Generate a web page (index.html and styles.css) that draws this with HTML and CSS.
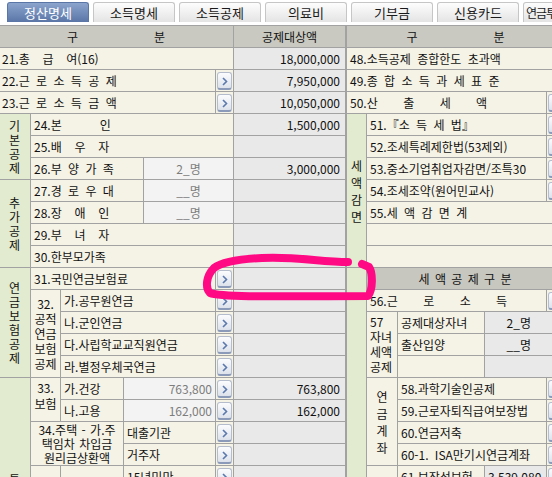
FILE: index.html
```html
<!DOCTYPE html>
<html lang="ko">
<head>
<meta charset="utf-8">
<title>정산명세</title>
<link rel="stylesheet" href="styles.css">
</head>
<body>
<div class="page">
  <div class="tabs">
    <div class="tab active">정산명세</div>
    <div class="tab">소득명세</div>
    <div class="tab">소득공제</div>
    <div class="tab">의료비</div>
    <div class="tab">기부금</div>
    <div class="tab">신용카드</div>
    <div class="tab last">연금투자명세</div>
  </div>
  <div class="sheet">
    <table class="grid left">
      <colgroup><col class="c1"><col class="c2"><col class="c3"><col class="c4"><col class="c5"><col class="c6"><col class="c7"></colgroup>
      <tr><th colspan="6"><div class="split"><span>구</span><span>분</span></div></th><th>공제대상액</th></tr>
      <tr><td colspan="6" class="lb">21.총  급  여(16)</td><td class="v">18,000,000</td></tr>
      <tr><td colspan="5" class="lb">22.근 로 소 득 공 제</td><td class="bt"><span class="btn"><svg width="13" height="16" viewBox="0 0 13 16"><path d="M5 5l3.5 3.5L5 12" fill="none" stroke="#5b79ad" stroke-width="1.6"/></svg></span></td><td class="v">7,950,000</td></tr>
      <tr><td colspan="5" class="lb">23.근 로 소 득 금 액</td><td class="bt"><span class="btn"><svg width="13" height="16" viewBox="0 0 13 16"><path d="M5 5l3.5 3.5L5 12" fill="none" stroke="#5b79ad" stroke-width="1.6"/></svg></span></td><td class="v">10,050,000</td></tr>
      <tr><td rowspan="3" class="grp g14">기<br>본<br>공<br>제</td><td colspan="5" class="lb">24.본      인</td><td class="v">1,500,000</td></tr>
      <tr><td colspan="5" class="lb">25.배  우  자</td><td class="v"></td></tr>
      <tr><td colspan="3" class="lb">26.부 양 가 족</td><td colspan="2" class="in">2_명</td><td class="v">3,000,000</td></tr>
      <tr><td rowspan="4" class="grp g14">추<br>가<br>공<br>제</td><td colspan="3" class="lb">27.경 로 우 대</td><td colspan="2" class="in">__명</td><td class="v"></td></tr>
      <tr><td colspan="3" class="lb">28.장  애  인</td><td colspan="2" class="in">__명</td><td class="v"></td></tr>
      <tr><td colspan="5" class="lb">29.부  녀  자</td><td class="v"></td></tr>
      <tr><td colspan="5" class="lb">30.한부모가족</td><td class="v"></td></tr>
      <tr><td rowspan="5" class="grp g14">연<br>금<br>보<br>험<br>공<br>제</td><td colspan="4" class="lb">31.국민연금보험료</td><td class="bt"><span class="btn"><svg width="13" height="16" viewBox="0 0 13 16"><path d="M5 5l3.5 3.5L5 12" fill="none" stroke="#5b79ad" stroke-width="1.6"/></svg></span></td><td class="v"></td></tr>
      <tr><td rowspan="4" class="sub s15">32.<br>공적<br>연금<br>보험<br>공제</td><td colspan="3" class="lb">가.공무원연금</td><td class="bt"><span class="btn"><svg width="13" height="16" viewBox="0 0 13 16"><path d="M5 5l3.5 3.5L5 12" fill="none" stroke="#5b79ad" stroke-width="1.6"/></svg></span></td><td class="v"></td></tr>
      <tr><td colspan="3" class="lb">나.군인연금</td><td class="bt"><span class="btn"><svg width="13" height="16" viewBox="0 0 13 16"><path d="M5 5l3.5 3.5L5 12" fill="none" stroke="#5b79ad" stroke-width="1.6"/></svg></span></td><td class="v"></td></tr>
      <tr><td colspan="3" class="lb">다.사립학교교직원연금</td><td class="bt"><span class="btn"><svg width="13" height="16" viewBox="0 0 13 16"><path d="M5 5l3.5 3.5L5 12" fill="none" stroke="#5b79ad" stroke-width="1.6"/></svg></span></td><td class="v"></td></tr>
      <tr><td colspan="3" class="lb">라.별정우체국연금</td><td class="bt"><span class="btn"><svg width="13" height="16" viewBox="0 0 13 16"><path d="M5 5l3.5 3.5L5 12" fill="none" stroke="#5b79ad" stroke-width="1.6"/></svg></span></td><td class="v"></td></tr>
      <tr><td rowspan="10" class="grp g14 low">특<br>별<br>소<br>득<br>공<br>제</td><td rowspan="2" class="sub s16 top">33.<br>보험</td><td class="lb">가.건강</td><td colspan="2" class="in num">763,800</td><td class="bt"><span class="btn"><svg width="13" height="16" viewBox="0 0 13 16"><path d="M5 5l3.5 3.5L5 12" fill="none" stroke="#5b79ad" stroke-width="1.6"/></svg></span></td><td class="v">763,800</td></tr>
      <tr><td class="lb">나.고용</td><td colspan="2" class="in num">162,000</td><td class="bt"><span class="btn"><svg width="13" height="16" viewBox="0 0 13 16"><path d="M5 5l3.5 3.5L5 12" fill="none" stroke="#5b79ad" stroke-width="1.6"/></svg></span></td><td class="v">162,000</td></tr>
      <tr><td colspan="2" rowspan="2" class="lb ml">34.주택 - 가.주<br>택임차 차입금<br>원리금상환액</td><td colspan="2" class="lb">대출기관</td><td class="bt"><span class="btn"><svg width="13" height="16" viewBox="0 0 13 16"><path d="M5 5l3.5 3.5L5 12" fill="none" stroke="#5b79ad" stroke-width="1.6"/></svg></span></td><td class="v"></td></tr>
      <tr><td colspan="2" class="lb">거주자</td><td class="bt"><span class="btn"><svg width="13" height="16" viewBox="0 0 13 16"><path d="M5 5l3.5 3.5L5 12" fill="none" stroke="#5b79ad" stroke-width="1.6"/></svg></span></td><td class="v"></td></tr>
      <tr><td rowspan="6" class="lb"></td><td rowspan="6" class="lb"></td><td colspan="2" class="lb">15년미만</td><td class="bt"><span class="btn"><svg width="13" height="16" viewBox="0 0 13 16"><path d="M5 5l3.5 3.5L5 12" fill="none" stroke="#5b79ad" stroke-width="1.6"/></svg></span></td><td class="v"></td></tr>
      <tr><td colspan="2" class="lb">15년~29년</td><td class="bt"></td><td class="v"></td></tr>
      <tr><td colspan="2" class="lb">30년이상</td><td class="bt"></td><td class="v"></td></tr>
      <tr><td colspan="2" class="lb">고정금리</td><td class="bt"></td><td class="v"></td></tr>
      <tr><td colspan="2" class="lb">기타대출</td><td class="bt"></td><td class="v"></td></tr>
      <tr><td colspan="2" class="lb">15년이상</td><td class="bt"></td><td class="v"></td></tr>
    </table>
    <table class="grid right">
      <colgroup><col class="r1"><col class="r2"><col class="r3"><col class="r4"><col class="r5"></colgroup>
      <tr><th colspan="5"><div class="split"><span>구</span><span>분</span></div></th></tr>
      <tr><td colspan="5" class="lb">48.소득공제 종합한도 초과액</td></tr>
      <tr><td colspan="5" class="lb">49.종 합 소 득 과 세 표 준</td></tr>
      <tr><td colspan="4" class="lb">50.산    출    세    액</td><td class="bt"><span class="btn"><svg width="13" height="16" viewBox="0 0 13 16"><path d="M5 5l3.5 3.5L5 12" fill="none" stroke="#5b79ad" stroke-width="1.6"/></svg></span></td></tr>
      <tr><td rowspan="7" class="grp g17">세<br>액<br>감<br>면</td><td colspan="3" class="lb">51.『소 득 세 법』</td><td class="bt"><span class="btn"><svg width="13" height="16" viewBox="0 0 13 16"><path d="M5 5l3.5 3.5L5 12" fill="none" stroke="#5b79ad" stroke-width="1.6"/></svg></span></td></tr>
      <tr><td colspan="3" class="lb">52.조세특례제한법(53제외)</td><td class="bt"><span class="btn"><svg width="13" height="16" viewBox="0 0 13 16"><path d="M5 5l3.5 3.5L5 12" fill="none" stroke="#5b79ad" stroke-width="1.6"/></svg></span></td></tr>
      <tr><td colspan="3" class="lb">53.중소기업취업자감면/조특30</td><td class="bt"><span class="btn"><svg width="13" height="16" viewBox="0 0 13 16"><path d="M5 5l3.5 3.5L5 12" fill="none" stroke="#5b79ad" stroke-width="1.6"/></svg></span></td></tr>
      <tr><td colspan="3" class="lb">54.조세조약(원어민교사)</td><td class="bt"><span class="btn"><svg width="13" height="16" viewBox="0 0 13 16"><path d="M5 5l3.5 3.5L5 12" fill="none" stroke="#5b79ad" stroke-width="1.6"/></svg></span></td></tr>
      <tr><td colspan="4" class="lb">55.세 액 감 면 계</td></tr>
      <tr><td colspan="4" class="lb"></td></tr>
      <tr><td colspan="4" class="lb"></td></tr>
      <tr><td rowspan="12" class="grp"></td><td colspan="4" class="hd2">세 액 공 제 구 분</td></tr>
      <tr><td colspan="3" class="lb">56.근    로    소    득</td><td class="bt"><span class="btn"><svg width="13" height="16" viewBox="0 0 13 16"><path d="M5 5l3.5 3.5L5 12" fill="none" stroke="#5b79ad" stroke-width="1.6"/></svg></span></td></tr>
      <tr><td rowspan="3" class="sub s15 top left-al">57<br>자녀<br>세액<br>공제</td><td class="lb">공제대상자녀</td><td colspan="2" class="v cnt">2_명</td></tr>
      <tr><td class="lb">출산입양</td><td colspan="2" class="v cnt">__명</td></tr>
      <tr><td class="lb"></td><td colspan="2" class="v"></td></tr>
      <tr><td rowspan="4" class="sub s17">연<br>금<br>계<br>좌</td><td colspan="2" class="lb">58.과학기술인공제</td><td class="bt"><span class="btn"><svg width="13" height="16" viewBox="0 0 13 16"><path d="M5 5l3.5 3.5L5 12" fill="none" stroke="#5b79ad" stroke-width="1.6"/></svg></span></td></tr>
      <tr><td colspan="2" class="lb">59.근로자퇴직급여보장법</td><td class="bt"><span class="btn"><svg width="13" height="16" viewBox="0 0 13 16"><path d="M5 5l3.5 3.5L5 12" fill="none" stroke="#5b79ad" stroke-width="1.6"/></svg></span></td></tr>
      <tr><td colspan="2" class="lb">60.연금저축</td><td class="bt"><span class="btn"><svg width="13" height="16" viewBox="0 0 13 16"><path d="M5 5l3.5 3.5L5 12" fill="none" stroke="#5b79ad" stroke-width="1.6"/></svg></span></td></tr>
      <tr><td colspan="2" class="lb">60-1. ISA만기시연금계좌</td><td class="bt"><span class="btn"><svg width="13" height="16" viewBox="0 0 13 16"><path d="M5 5l3.5 3.5L5 12" fill="none" stroke="#5b79ad" stroke-width="1.6"/></svg></span></td></tr>
      <tr><td rowspan="3" class="lb"></td><td class="lb">61.보장성보험</td><td class="v amt">3,539,080</td><td class="bt"><span class="btn"><svg width="13" height="16" viewBox="0 0 13 16"><path d="M5 5l3.5 3.5L5 12" fill="none" stroke="#5b79ad" stroke-width="1.6"/></svg></span></td></tr>
      <tr><td class="lb">장애인전용</td><td class="v"></td><td class="bt"></td></tr>
      <tr><td class="lb">의료비</td><td class="v"></td><td class="bt"></td></tr>
    </table>
  </div>
  <svg class="scribble" width="552" height="477" viewBox="0 0 552 477">
    <path d="M348 262 C322 262 292 256 262 258 C240 259 222 262 214 268 C206 276 205 288 210 293 C222 298 300 296 368 296 C373 290 373 273 369 267 L362 264" fill="none" stroke="#ff0a84" stroke-width="8" stroke-linecap="round" stroke-linejoin="round"/>
  </svg>
</div>
</body>
</html>
```
FILE: styles.css
```css
html, body {
  margin: 0;
  padding: 0;
}
body {
  width: 552px;
  height: 477px;
  overflow: hidden;
  background: #ffffff;
  font-family: "Noto Sans CJK KR", "DejaVu Sans", sans-serif;
  font-size: 12px;
  color: #111111;
}
.page {
  position: relative;
  width: 552px;
  height: 477px;
  overflow: hidden;
}
.tabs {
  display: flex;
  gap: 4px;
  height: 25px;
  box-sizing: border-box;
  padding: 2px 0 0 7px;
}
.tab {
  flex: 0 0 82px;
  height: 20px;
  box-sizing: border-box;
  border: 1px solid #c6c6c6;
  border-bottom: none;
  border-radius: 3px 3px 0 0;
  background: linear-gradient(#fdfdfd, #e4e4e4);
  text-align: center;
  line-height: 19px;
  font-size: 13px;
  color: #1a1a1a;
  white-space: nowrap;
  overflow: hidden;
}
.tab.last {
  text-align: left;
  padding-left: 2px;
  font-size: 12px;
  letter-spacing: -1px;
}
.tab.active {
  background: linear-gradient(#8ba4cd, #5a76a7);
  border-color: #5a76a7;
  color: #ffffff;
}
.sheet {
  display: flex;
  align-items: flex-start;
  margin-left: -2px;
}
table.grid {
  border-collapse: collapse;
  table-layout: fixed;
  flex: none;
}
table.left { width: 347px; }
table.right { width: 218px; }
col.c1 { width: 32px; }
col.c2 { width: 30px; }
col.c3 { width: 63px; }
col.c4 { width: 20px; }
col.c5 { width: 72px; }
col.c6 { width: 18px; }
col.c7 { width: 112px; }
col.r1 { width: 20px; }
col.r2 { width: 31px; }
col.r3 { width: 87px; }
col.r4 { width: 62px; }
col.r5 { width: 18px; }
.grid tr { height: 22px; }
.grid td, .grid th {
  border: 1px solid #a2a2a2;
  padding: 0 3px;
  line-height: 14px;
  overflow: hidden;
  white-space: pre;
  word-spacing: 3px;
  vertical-align: middle;
}
.grid th {
  background: #c9c9c1;
  font-weight: normal;
  text-align: center;
}
.split {
  display: flex;
  justify-content: center;
  gap: 76px;
}
.lb {
  background: #f5f3e6;
  text-align: left;
}
.ml {
  text-align: center !important;
  vertical-align: top !important;
  line-height: 14px !important;
  padding-top: 1px !important;
  white-space: nowrap !important;
  word-spacing: 1px !important;
}
.v {
  background: #e9e9e9;
  text-align: right;
  padding-right: 5px !important;
}
.v.cnt {
  padding-right: 33px !important;
}
.v.amt {
  padding-right: 7px !important;
}
.in {
  background: #f3f3f3;
  color: #7d7d7d;
  text-align: center;
}
.in.num {
  text-align: right;
  padding-right: 3px !important;
}
.grp {
  background: #e2ebcf;
  text-align: center;
  padding: 0 !important;
}
.g14 { line-height: 14px !important; }
.g17 { line-height: 17px !important; }
.grp.low {
  vertical-align: top;
  padding-top: 95px !important;
}
.sub {
  background: #f5f3e6;
  text-align: center;
  padding: 0 !important;
}
.s15 { line-height: 15px !important; }
.s16 { line-height: 16px !important; }
.s17 { line-height: 17px !important; }
.sub.top {
  vertical-align: top;
  padding-top: 2px !important;
}
.sub.left-al {
  text-align: left;
  padding-left: 3px !important;
}
.hd2 {
  background: #c7c7bf;
  text-align: center;
  word-spacing: 0 !important;
  letter-spacing: 1px;
}
.bt {
  background: #f5f3e6;
  padding: 0 !important;
  text-align: center;
}
.btn {
  display: block;
  width: 15px;
  height: 18px;
  margin: 0 auto;
  box-sizing: border-box;
  border: 1px solid #b5bdcd;
  border-bottom: 2px solid #8b9ab8;
  border-radius: 3px;
  background: linear-gradient(#fbfcfd, #dde2eb);
}
.btn svg {
  display: block;
}
.scribble {
  position: absolute;
  left: 0;
  top: 0;
  pointer-events: none;
}
```
